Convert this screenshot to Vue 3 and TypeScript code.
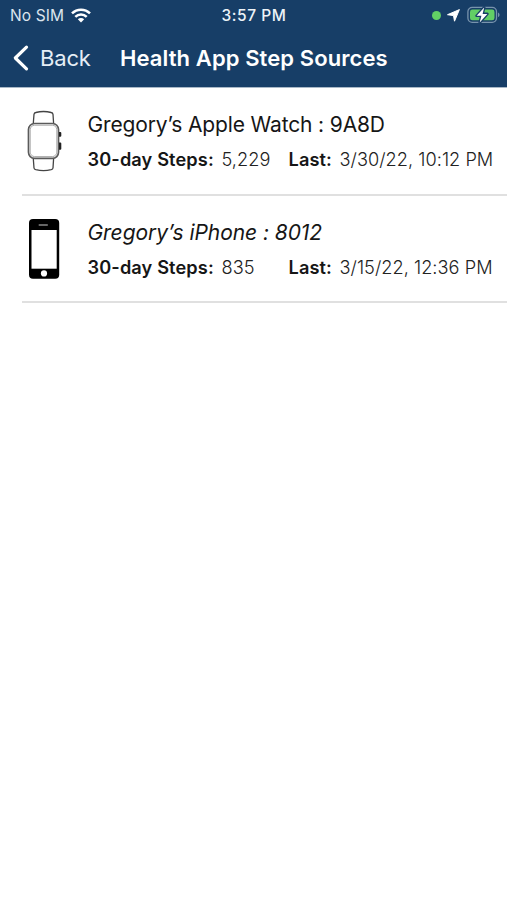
<script setup lang="ts">
interface StepSource {
  name: string
  device: 'watch' | 'phone'
  steps: string
  last: string
}

const sources: StepSource[] = [
  { name: 'Gregory’s Apple Watch : 9A8D', device: 'watch', steps: '5,229', last: '3/30/22, 10:12 PM' },
  { name: 'Gregory’s iPhone : 8012', device: 'phone', steps: '835', last: '3/15/22, 12:36 PM' },
]
</script>

<template>
  <div class="screen">
    <header class="header">
      <div class="status">
        <div class="carrier">
          <span class="sim">No SIM</span>
          <svg class="wifi" width="20" height="15" viewBox="0 0 20 15">
            <g fill="none" stroke="#fff" stroke-width="2.5">
              <path d="M1 5.4C6 .4 14 .4 19 5.4" />
              <path d="M4.3 8.8c3.2-3.2 8.2-3.2 11.4 0" />
            </g>
            <path d="M6.8 11.2c1.8-1.7 4.6-1.7 6.4 0L10 14.5z" fill="#fff" />
          </svg>
        </div>
        <span class="clock">3:57 PM</span>
        <div class="indicators">
          <span class="dot"></span>
          <svg class="location" width="13" height="13" viewBox="0 0 13 13">
            <path d="M12.4.6 7.5 12.2 6.5 6.6.5 5.7z" fill="#fff" stroke="#fff" stroke-width="1" stroke-linejoin="round" />
          </svg>
          <svg class="battery" width="34" height="18" viewBox="0 0 34 18">
            <rect x=".9" y="1.4" width="28.6" height="14.9" rx="4.3" fill="none" stroke="#7893ad" stroke-width="1.3" />
            <path d="M31 6.5c2 .8 2 3.8 0 4.6z" fill="#7893ad" />
            <rect x="3" y="3.5" width="24.5" height="10.8" rx="2.4" fill="#62cf65" />
            <path d="M17.2 1.4 9.6 9.8h4.8l-1.7 6.8 7.7-8.7h-4.8z" fill="#fff" stroke="#173e67" stroke-width="2.6" stroke-linejoin="round" paint-order="stroke" />
          </svg>
        </div>
      </div>
      <nav class="nav">
        <svg class="chevron" width="18" height="28" viewBox="0 0 18 28">
          <path d="M14.5 3.2 3.3 14l11.2 10.8" fill="none" stroke="#fff" stroke-width="3.2" stroke-linecap="round" stroke-linejoin="round" />
        </svg>
        <span class="back">Back</span>
        <h1 class="title">Health App Step Sources</h1>
      </nav>
    </header>
    <ul class="list">
      <li v-for="source in sources" :key="source.name" class="row" :class="source.device">
        <div class="icon">
          <svg v-if="source.device === 'watch'" width="36" height="62" viewBox="0 0 36 62" fill="none">
            <path d="M6.3 13.2 7 4.3Q7.2 2.8 8.8 2.5Q16.5.5 24.2 2.5Q25.8 2.8 26 4.3L26.6 13.2" stroke="#444" stroke-width="1.3" />
            <path d="M6.3 48.8 7 58Q7.2 59.3 8.8 59.7Q16.5 61.4 24.2 59.7Q25.8 59.3 26 58L26.6 48.8" stroke="#444" stroke-width="1.3" />
            <rect x="1.5" y="13.5" width="30" height="34.8" rx="6" stroke="#5a5a5a" stroke-width="1.7" />
            <rect x="3.2" y="15.2" width="26.6" height="31.4" rx="4.5" stroke="#aaa" stroke-width="1" />
            <path d="M32 22h1.3q1 0 1 1v2.8q0 1-1 1H32zM32 32.6h1.3q1 0 1 1v5.2q0 1-1 1H32z" fill="#222" />
          </svg>
          <svg v-else width="36" height="62" viewBox="0 0 36 62">
            <rect x="2" y="1" width="30.2" height="59.8" rx="4" fill="#000" />
            <rect x="4.5" y="12" width="25.2" height="38.7" fill="#fff" />
            <rect x="11.5" y="6.3" width="9.5" height="1.4" rx=".7" fill="#888" />
            <circle cx="17" cy="55.4" r="3.1" fill="#fff" />
          </svg>
        </div>
        <div class="info">
          <div class="name">{{ source.name }}</div>
          <div class="details">
            <span class="steps-label">30-day Steps:</span>
            <span class="steps">{{ source.steps }}</span>
            <span class="last-label">Last:</span>
            <span class="last">{{ source.last }}</span>
          </div>
        </div>
      </li>
    </ul>
  </div>
</template>

<style>
body {
  background: #fff;
}
</style>

<style scoped>
.screen {
  min-height: 900px;
  background: #fff;
  font-family: Inter, "Liberation Sans", sans-serif;
  color: #161616;
  white-space: nowrap;
}
.header {
  box-sizing: border-box;
  height: 88px;
  background: #173e67;
  border-bottom: 1px solid #a9b8c7;
  color: #fff;
}
.status {
  display: grid;
  grid-template-columns: 1fr auto 1fr;
  align-items: center;
  height: 30px;
  padding: 0 6px 0 10px;
  font-size: 15.5px;
}
.carrier {
  display: flex;
  align-items: center;
  gap: 7px;
  letter-spacing: 0.1px;
  color: #dce5ee;
}
.clock {
  margin-right: 3px;
  font-weight: 500;
  letter-spacing: 0.55px;
  color: #edf3f8;
}
.indicators {
  display: flex;
  align-items: center;
  justify-content: flex-end;
}
.dot {
  width: 9px;
  height: 9px;
  border-radius: 50%;
  background: #62cf65;
}
.location {
  margin: 0 7px 0 6px;
}
.nav {
  display: flex;
  align-items: center;
  height: 56px;
  padding-left: 12px;
}
.back {
  width: 80px;
  margin-left: 10px;
  font-size: 22px;
  letter-spacing: -0.15px;
  color: #e6eef6;
}
.title {
  margin: 0;
  font-size: 22px;
  font-weight: 600;
  letter-spacing: 0.09px;
}
.list {
  margin: 0;
  padding: 0 0 0 22px;
  list-style: none;
}
.row {
  box-sizing: border-box;
  display: flex;
  height: 107.5px;
  padding-top: 21px;
  border-bottom: 2px solid #e0e0e0;
}
.row:last-child {
  height: 107.5px;
}
.icon {
  width: 36px;
  margin: 1px 24.5px 0 5px;
}
.name {
  height: 32px;
  font-size: 21px;
  line-height: 32px;
  letter-spacing: -0.14px;
}
.phone .name {
  font-style: italic;
  letter-spacing: -0.06px;
}
.details {
  display: grid;
  grid-template-columns: 134px 67px 51px auto;
  margin-top: 3px;
  font-size: 18.2px;
  line-height: 30px;
}
.steps-label,
.last-label {
  font-weight: 600;
  letter-spacing: 0.12px;
}
.steps,
.last {
  font-weight: 300;
  letter-spacing: 0.03px;
  color: #222;
}
</style>
